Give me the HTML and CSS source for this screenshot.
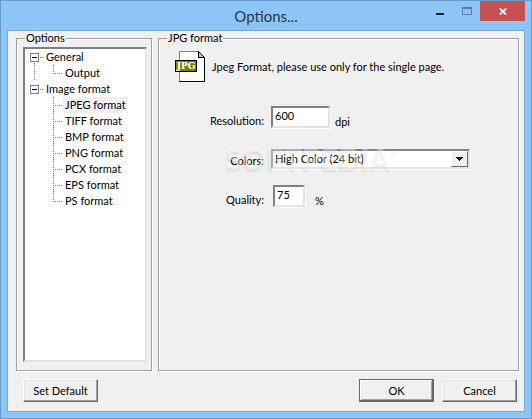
FILE: index.html
```html
<!DOCTYPE html>
<html lang="en">
<head>
  <meta charset="UTF-8" />
  <title>Options...</title>
  <meta name="viewport" content="width=device-width, initial-scale=1.0" />
  <link rel="stylesheet" href="styles.css">
</head>
<body>

  <div class="window">
    <header class="titlebar">
      <h1>Options...</h1>
      <div class="window-controls">
        <button type="button" class="control" aria-label="Minimize">
          <svg width="10" height="10" viewBox="0 0 10 10"><path d="M1 7h8v2H1z" fill="#222" /></svg>
        </button>
        <button type="button" class="control" aria-label="Maximize">
          <svg width="10" height="8" viewBox="0 0 10 8" shape-rendering="crispEdges"><path d="M0 0h10v8H0zM1 2v5h8V2z" fill="#5a7d9c" fill-rule="evenodd" /></svg>
        </button>
        <button type="button" class="control close" aria-label="Close">
          <svg width="8" height="7" viewBox="0 0 8 7"><path d="M0.8 0.3L7.2 6.7M7.2 0.3L0.8 6.7" stroke="#fff" stroke-width="1.8" /></svg>
        </button>
      </div>
    </header>

    <form class="client">
      <div class="panels">
        <fieldset class="group options">
          <legend>Options</legend>
          <ul class="tree">
            <li class="branch">
              <span class="node"><button type="button" class="toggle" aria-label="Collapse General"></button>General</span>
              <ul>
                <li><span class="leaf">Output</span></li>
              </ul>
            </li>
            <li class="branch">
              <span class="node"><button type="button" class="toggle" aria-label="Collapse Image format"></button>Image format</span>
              <ul>
                <li><span class="leaf selected">JPEG format</span></li>
                <li><span class="leaf">TIFF format</span></li>
                <li><span class="leaf">BMP format</span></li>
                <li><span class="leaf">PNG format</span></li>
                <li><span class="leaf">PCX format</span></li>
                <li><span class="leaf">EPS format</span></li>
                <li><span class="leaf">PS format</span></li>
              </ul>
            </li>
          </ul>
        </fieldset>

        <fieldset class="group settings">
          <legend>JPG format</legend>
          <div class="intro">
            <svg width="30" height="32" viewBox="0 0 30 32" shape-rendering="crispEdges">
              <path d="M4 0h20l6 6v26H4z" fill="#fff" />
              <path d="M4 0h20v1H5v30H4z" fill="#808080" />
              <path d="M4 31h26V6h-1v24H4z" fill="#000" />
              <path d="M23 0h1v1h1v1h1v1h1v1h1v1h1v1h1v1h-7z" fill="#000" />
              <path d="M24 2v4h4z" fill="#c0c0c0" />
              <path d="M0 9h22v12H0z" fill="#000" />
              <path d="M1 10h20v10H1z" fill="#808000" />
              <text x="11" y="18" text-anchor="middle" class="icon-text">JPG</text>
            </svg>
            <span>Jpeg Format, please use only for the single page.</span>
          </div>

          <div class="fields">
            <label for="resolution">Resolution:</label>
            <div class="field">
              <input type="text" id="resolution" class="sunken wide" value="600" />
              <span class="unit">dpi</span>
            </div>

            <label for="colors" class="select-label">Colors:</label>
            <div class="field">
              <div class="dropdown sunken">
                <select id="colors">
                  <option selected>High Color (24 bit)</option>
                </select>
                <svg class="arrow" width="7" height="4" viewBox="0 0 7 4" shape-rendering="crispEdges"><path d="M0 0h7v1H6v1H5v1H4v1H3V3H2V2H1V1H0z" /></svg>
              </div>
            </div>

            <label for="quality">Quality:</label>
            <div class="field percent">
              <input type="text" id="quality" class="sunken" value="75" />
              <span class="unit">%</span>
            </div>

            <div class="watermark">SOFTPEDIA<sup>®</sup></div>
          </div>
        </fieldset>
      </div>

      <div class="actions">
        <button type="button" class="btn">Set Default</button>
        <button type="submit" class="btn default">OK</button>
        <button type="button" class="btn">Cancel</button>
      </div>
    </form>
  </div>

</body>
</html>
```
FILE: styles.css
```css
* {
  box-sizing: border-box;
}

body {
  margin: 0;
  font-family: Lato, "Liberation Sans", sans-serif;
  font-size: 11px;
  line-height: 14px;
  color: #000;
}

button, input, select {
  font: inherit;
  color: inherit;
}

.window {
  display: flex;
  flex-direction: column;
  min-height: 100vh;
  padding: 0 6px 6px;
  background: #8cc6f9;
  border: 1px solid #6a9bc8;
}

/* Title bar */
.titlebar {
  display: grid;
  grid-template-columns: 1fr auto 1fr;
  height: 29px;
}

.titlebar h1 {
  grid-column: 2;
  margin: 0;
  font-size: 15px;
  font-weight: normal;
  line-height: 30px;
  color: #2a3540;
}

.window-controls {
  display: flex;
  justify-content: flex-end;
}

.control {
  display: flex;
  align-items: center;
  justify-content: center;
  width: 27px;
  height: 20px;
  padding: 0;
  background: none;
  border: none;
}

.control.close {
  width: 45px;
  background: #c75050;
}

/* Dialog area */
.client {
  flex: 1;
  display: flex;
  flex-direction: column;
  padding: 0 5px 9px 8px;
  background: #f0f0f0;
  border: 1px solid #78a9d6;
}

.panels {
  flex: 1;
  display: flex;
  gap: 6px;
}

.group {
  min-width: 0;
  margin: 0;
  padding: 2px 4px 8px 6px;
  border: 1px solid #a0a0a0;
  box-shadow: 1px 1px 0 #fff, inset 1px 1px 0 #fff;
}

.group legend {
  margin-left: 2px;
  padding: 0 1px;
  background: #f0f0f0;
}

.options {
  display: flex;
  flex: 0 0 136px;
}

.settings {
  flex: 1;
}

/* Tree */
.tree, .tree ul {
  margin: 0;
  padding: 0;
  list-style: none;
}

.tree {
  flex: 1;
  padding-left: 5px;
  line-height: 16px;
  background: #fff;
  border: 2px solid;
  border-color: #808080 #e3e3e3 #e3e3e3 #808080;
}

.branch {
  background: repeating-linear-gradient(#808080 0 1px, transparent 1px 2px) 4px 8px / 1px 100% no-repeat;
}

.branch:last-child {
  background: none;
}

.node {
  display: flex;
  align-items: center;
  height: 16px;
}

.toggle {
  position: relative;
  width: 9px;
  height: 9px;
  margin-right: 7px;
  padding: 0;
  background: linear-gradient(#000, #000) center / 5px 1px no-repeat #fff;
  border: 1px solid #808080;
}

.toggle::after {
  content: "";
  position: absolute;
  top: 3px;
  left: 9px;
  width: 3px;
  height: 1px;
  background: repeating-linear-gradient(90deg, #808080 0 1px, transparent 1px 2px);
}

.tree ul {
  padding-left: 23px;
}

.tree ul li {
  display: flex;
  align-items: center;
  height: 16px;
  background: repeating-linear-gradient(#808080 0 1px, transparent 1px 2px) 0 0 / 1px 16px no-repeat;
}

.tree ul li:last-child {
  background-size: 1px 9px;
}

.tree ul li::before {
  content: "";
  width: 10px;
  height: 1px;
  background: repeating-linear-gradient(90deg, #808080 0 1px, transparent 1px 2px);
}

.leaf {
  padding: 0 2px;
}

.leaf.selected {
  background: #f0f0f0;
}

/* Format settings */
.intro {
  display: flex;
  align-items: center;
  gap: 7px;
  padding: 4px 0 0 10px;
}

.icon-text {
  font-family: "DejaVu Serif", serif;
  font-size: 9px;
  font-weight: bold;
  fill: #fff;
}

.fields {
  position: relative;
  display: grid;
  grid-template-columns: 99px 1fr;
  grid-template-rows: 29px 20px 22px;
  column-gap: 7px;
  row-gap: 15px;
  align-items: start;
  margin-top: 22px;
}

.fields label {
  padding-top: 9px;
  text-align: right;
}

.fields .select-label {
  padding-top: 5px;
}

.field {
  display: flex;
  align-items: center;
  gap: 5px;
}

.unit {
  padding-top: 10px;
}

.sunken {
  background: #fff;
  border: 2px solid;
  border-color: #808080 #e3e3e3 #e3e3e3 #808080;
  box-shadow: 1px 1px 0 #fff;
}

input.sunken {
  width: 32px;
  height: 22px;
  padding: 0 2px 3px;
}

input.wide {
  width: 59px;
}

.percent {
  gap: 10px;
  padding-left: 2px;
}

.dropdown {
  display: flex;
  position: relative;
  width: 199px;
  height: 20px;
}

.dropdown select {
  flex: 1;
  padding: 0 2px;
  appearance: none;
  background: none;
  border: none;
}

.arrow {
  position: absolute;
  top: 0;
  right: 0;
  width: 17px;
  height: 16px;
  padding: 5px 4px;
  background: #f0f0f0;
  border: 1px solid;
  border-color: #fff #696969 #696969 #fff;
  pointer-events: none;
}

.watermark {
  position: absolute;
  top: 38px;
  left: 61px;
  font-size: 30px;
  font-weight: 900;
  line-height: 30px;
  color: rgba(255, 255, 255, 0.4);
  text-shadow: -1px 2px 2px rgba(0, 0, 0, 0.08);
  pointer-events: none;
}

.watermark sup {
  font-size: 8px;
  line-height: 8px;
  vertical-align: 14px;
}

/* Bottom buttons */
.actions {
  display: flex;
  gap: 8px;
  margin-top: 8px;
  padding: 0 2px 0 7px;
}

.btn {
  width: 75px;
  height: 23px;
  padding: 0;
  background: #f0f0f0;
  border: 1px solid;
  border-color: #fff #696969 #696969 #fff;
  box-shadow: inset -1px -1px 0 #a0a0a0, inset 1px 1px 0 #e3e3e3;
}

.btn:first-child {
  margin-right: auto;
}

.btn.default {
  border-color: #696969;
  box-shadow: inset -1px -1px 0 #696969, inset 1px 1px 0 #fff, inset -2px -2px 0 #a0a0a0;
}
```
